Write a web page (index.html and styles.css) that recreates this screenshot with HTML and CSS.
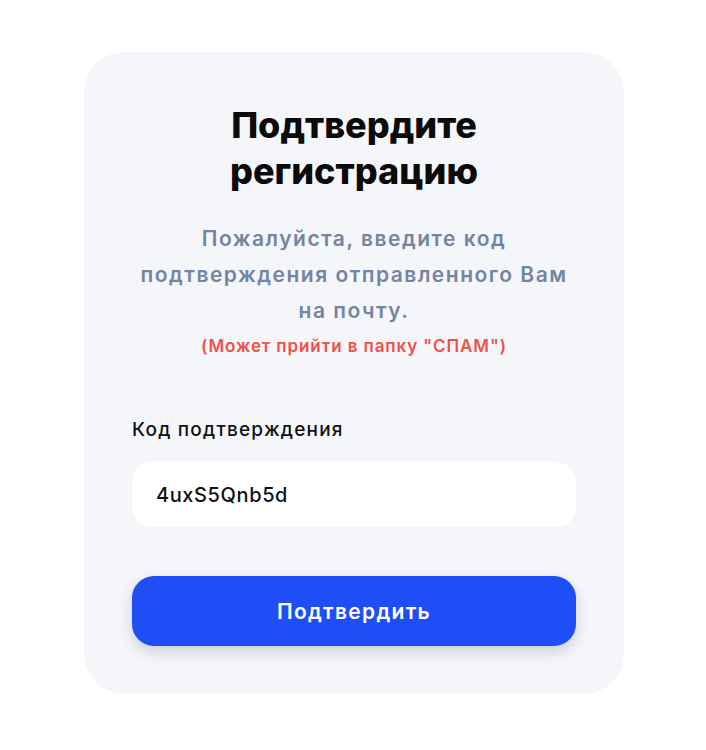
FILE: index.html
```html
<!DOCTYPE html>
<html lang="ru">
<head>
<meta charset="utf-8">
<title>Подтвердите регистрацию</title>
<link rel="stylesheet" href="styles.css">
</head>
<body>
<main class="card">
  <h1 class="title">Подтвердите<br>регистрацию</h1>
  <p class="subtitle">Пожалуйста, введите код<br>подтверждения отправленного Вам<br>на почту.</p>
  <p class="spam">(Может прийти в папку "СПАМ")</p>
  <form class="form">
    <label class="label" for="code">Код подтверждения</label>
    <input class="input" id="code" type="text" value="4uxS5Qnb5d">
    <button class="button" type="button">Подтвердить</button>
  </form>
</main>
</body>
</html>
```
FILE: styles.css
```css
* { box-sizing: border-box; }
html, body { margin: 0; padding: 0; background: #ffffff; }
body {
  font-family: Inter, "Noto Sans", sans-serif;
  padding: 52px 0 0 84px;
}
.card {
  width: 540px;
  background: #f5f6fa;
  border-radius: 40px;
  padding: 50px 48px 48px;
  display: flex;
  flex-direction: column;
}
.title {
  margin: 0;
  text-align: center;
  font-size: 36px;
  line-height: 46px;
  font-weight: 800;
  color: #0b0b0b;
}
.subtitle {
  margin: 27px 0 0;
  text-align: center;
  font-size: 21px;
  line-height: 36px;
  font-weight: 600;
  letter-spacing: 1.5px;
  color: #7485a1;
}
.spam {
  margin: 5px 0 0;
  text-align: center;
  font-size: 17px;
  line-height: 24px;
  font-weight: 600;
  letter-spacing: 0.9px;
  color: #ef524b;
}
.form {
  display: flex;
  flex-direction: column;
  margin-top: 60px;
}
.label {
  font-size: 19px;
  line-height: 24px;
  font-weight: 500;
  letter-spacing: 1.2px;
  color: #111111;
}
.input {
  margin-top: 20px;
  height: 65px;
  border: none;
  border-radius: 20px;
  background: #ffffff;
  padding: 0 24px;
  font-family: inherit;
  font-size: 20px;
  font-weight: 500;
  letter-spacing: 0.6px;
  color: #111111;
  outline: none;
}
.button {
  margin-top: 49px;
  height: 70px;
  border: none;
  border-radius: 22px;
  background: #1f4ef6;
  color: #ffffff;
  font-family: inherit;
  font-size: 21px;
  font-weight: 600;
  letter-spacing: 1.3px;
  box-shadow: 0 6px 14px rgba(30, 40, 70, 0.18);
  cursor: pointer;
}
```
